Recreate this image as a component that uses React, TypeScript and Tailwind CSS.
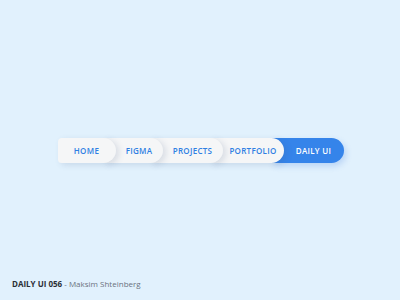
import React from 'react';

// Breadcrumb-style nav: overlapping pills, earlier ones on top
const items = [
  { label: 'HOME', w: 'w-[58px]', z: 'z-50' },
  { label: 'FIGMA', w: 'w-[59px]', z: 'z-40' },
  { label: 'PROJECTS', w: 'w-[72px]', z: 'z-30' },
  { label: 'PORTFOLIO', w: 'w-[73px]', z: 'z-20' },
];

export default function App() {
  return (
    <div className="w-[400px] h-[300px] bg-[#e1f1fd] flex flex-col font-['Open_Sans',sans-serif]">
      <div className="flex-1 flex justify-center pl-[1px] pt-[138px]">
        <nav className="flex h-[25px]">
          {items.map((item, i) => (
            <div
              key={item.label}
              className={`relative ${item.z} ${item.w} h-[25px] bg-[#f5f6f7] rounded-r-[13px] shadow-[3px_2px_6px_rgba(60,90,130,0.16)] flex items-center justify-center text-[8px] font-semibold tracking-[0.3px] text-[#2f7fe3] ${
                i === 0 ? 'rounded-l-[4px]' : '-ml-[12px] pl-[12px]'
              }`}
            >
              {item.label}
            </div>
          ))}
          <div className="relative z-10 -ml-[12px] pl-[12px] w-[72px] h-[25px] bg-[#3584ea] rounded-r-[13px] shadow-[2px_3px_6px_rgba(40,110,220,0.22)] flex items-center justify-center text-[8px] font-semibold tracking-[0.3px] text-white">
            DAILY UI
          </div>
        </nav>
      </div>
      <div className="px-[12px] pb-[12px] text-[8px] leading-none">
        <span className="font-bold text-[#2b2f36]">DAILY UI 056</span>
        <span className="text-[#6b7280]"> - Maksim Shteinberg</span>
      </div>
    </div>
  );
}
